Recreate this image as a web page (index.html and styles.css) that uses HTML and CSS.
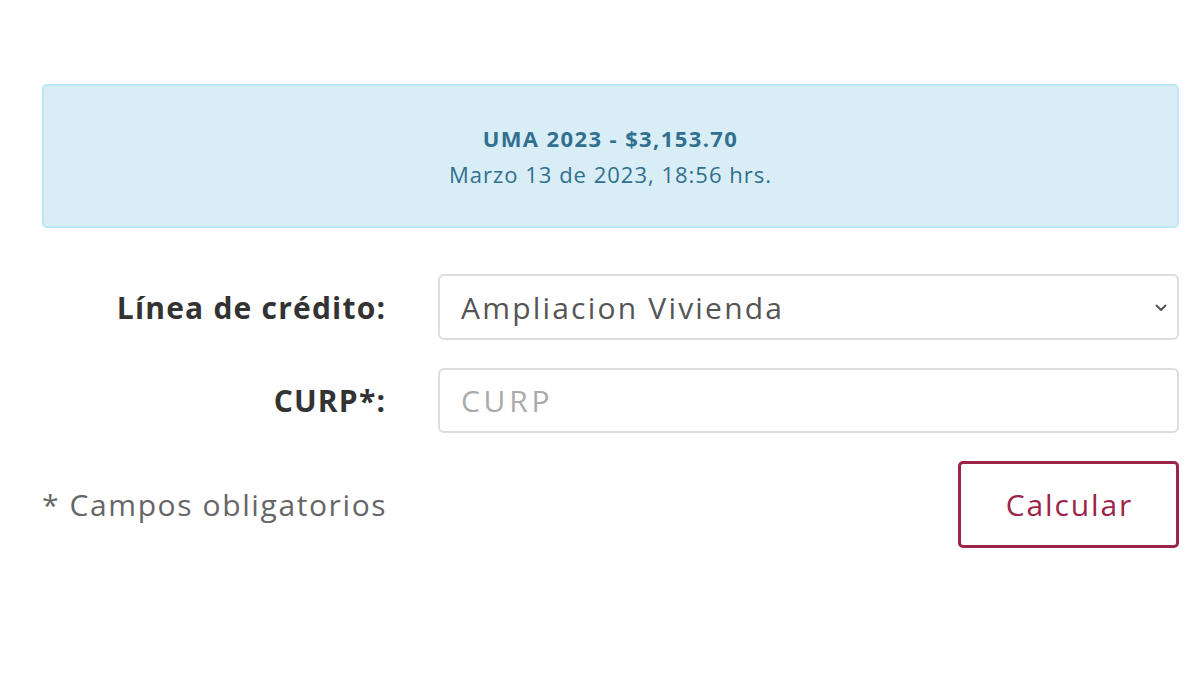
FILE: index.html
```html
<!DOCTYPE html>
<html lang="es">
<head>
  <meta charset="UTF-8">
  <title>Calculadora UMA</title>
  <link rel="stylesheet" href="styles.css">
</head>
<body>
  <div class="panel">
    <div class="alert-info">
      <strong>UMA 2023 - $3,153.70</strong><br>
      <span class="fecha">Marzo 13 de 2023, 18:56 hrs.</span>
    </div>

    <form class="form-calc">
      <label class="etiqueta" for="linea">Línea de crédito:</label>
      <div class="select-wrap">
        <select id="linea" name="linea">
          <option>Ampliacion Vivienda</option>
        </select>
        <svg class="chevron" width="12" height="8" viewBox="0 0 12 8">
          <path d="M1.5 1.5 L6 6 L10.5 1.5" fill="none" stroke="#555" stroke-width="2" stroke-linecap="round" stroke-linejoin="round"/>
        </svg>
      </div>

      <label class="etiqueta" for="curp">CURP*:</label>
      <input type="text" id="curp" name="curp" placeholder="CURP">

      <p class="nota">* Campos obligatorios</p>
      <div class="acciones">
        <button type="button">Calcular</button>
      </div>
    </form>
  </div>
</body>
</html>
```

FILE: styles.css
```css
body {
  margin: 0;
  font-family: "Open Sans", Arial, sans-serif;
  color: #333;
  background: #fff;
}
.panel {
  padding: 84px 21px 0 42px;
}
.alert-info {
  background-color: #d9edf7;
  border: 2px solid #bce8f1;
  border-radius: 5px;
  color: #31708f;
  text-align: center;
  font-size: 22px;
  line-height: 36px;
  padding: 34px 20px;
}
.alert-info strong {
  font-weight: 700;
  letter-spacing: 1.4px;
}
.fecha {
  letter-spacing: 1px;
}
.form-calc {
  display: grid;
  grid-template-columns: 343px 1fr;
  column-gap: 53px;
  row-gap: 28px;
  align-items: center;
  margin-top: 46px;
}
.etiqueta {
  text-align: right;
  font-weight: 700;
  font-size: 30px;
  letter-spacing: 1.2px;
  margin-right: -1.2px;
  color: #333;
}
.select-wrap {
  position: relative;
}
select,
input {
  width: 100%;
  box-sizing: border-box;
  height: 66px;
  border: 2px solid #ddd;
  border-radius: 6px;
  background: #fff;
  font-family: "Open Sans", Arial, sans-serif;
  font-size: 30px;
  letter-spacing: 2.2px;
  color: #555;
  padding: 0 21px;
  margin: 0;
}
select {
  appearance: none;
  -webkit-appearance: none;
}
input {
  height: 65px;
}
input::placeholder {
  color: #aaa;
  letter-spacing: 3.7px;
}
.chevron {
  position: absolute;
  right: 12px;
  top: 30px;
}
.nota {
  margin: 0 -1.6px 0 0;
  font-size: 30px;
  letter-spacing: 1.6px;
  color: #666;
  text-align: right;
  white-space: nowrap;
}
.acciones {
  display: flex;
  justify-content: flex-end;
}
button {
  width: 221px;
  height: 87px;
  box-sizing: border-box;
  background: #fff;
  border: 3px solid #9d2449;
  border-radius: 5px;
  color: #9d2449;
  font-family: "Open Sans", Arial, sans-serif;
  font-size: 30px;
  letter-spacing: 1.9px;
  padding: 0 0 0 1.9px;
  cursor: pointer;
}
```
